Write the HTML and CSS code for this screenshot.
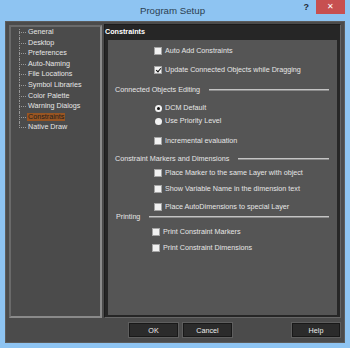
FILE: index.html
```html
<!DOCTYPE html>
<html lang="en">
<head>
    <meta charset="UTF-8" />
    <title>Program Setup</title>
    <link rel="stylesheet" href="styles.css">
</head>
<body>
    <div class="window">
        <div class="titlebar">
            <span></span>
            <span class="title">Program Setup</span>
            <div class="caption-btns">
                <span class="help">?</span>
                <span class="close">✕</span>
            </div>
        </div>
        <div class="frame">
            <div class="panes">
                <ul class="tree">
                    <li><span>General</span></li>
                    <li><span>Desktop</span></li>
                    <li><span>Preferences</span></li>
                    <li><span>Auto-Naming</span></li>
                    <li><span>File Locations</span></li>
                    <li><span>Symbol Libraries</span></li>
                    <li><span>Color Palette</span></li>
                    <li><span>Warning Dialogs</span></li>
                    <li class="selected"><span>Constraints</span></li>
                    <li><span>Native Draw</span></li>
                </ul>
                <div class="page">
                    <div class="page-head">Constraints</div>
                    <div class="page-body">
                        <label class="row ind mt6"><span class="check"></span>Auto Add Constraints</label>
                        <label class="row ind mt9"><span class="check on"></span>Update Connected Objects while Dragging</label>

                        <div class="section mt10"><span>Connected Objects Editing</span><i class="rule"></i></div>
                        <label class="row ind mt8"><span class="radio on"></span>DCM Default</label>
                        <label class="row ind mt3"><span class="radio"></span>Use Priority Level</label>
                        <label class="row ind mt10"><span class="check"></span>Incremental evaluation</label>

                        <div class="section mt8"><span>Constraint Markers and Dimensions</span><i class="rule"></i></div>
                        <label class="row ind mt4"><span class="check"></span>Place Marker to the same Layer with object</label>
                        <label class="row ind mt6"><span class="check"></span>Show Variable Name in the dimension text</label>
                        <label class="row ind mt8"><span class="check"></span>Place AutoDimensions to special Layer</label>

                        <div class="section print mt0"><span>Printing</span><i class="rule"></i></div>
                        <label class="row ind2 mt5"><span class="check"></span>Print Constraint Markers</label>
                        <label class="row ind2 mt6"><span class="check"></span>Print Constraint Dimensions</label>
                    </div>
                </div>
            </div>
            <div class="buttons">
                <button>OK</button>
                <button>Cancel</button>
                <button class="btn-help">Help</button>
            </div>
        </div>
    </div>
</body>
</html>
```

FILE: styles.css
```css
/* Dasar */
* {
    box-sizing: border-box;
}
body {
    margin: 0;
    font-family: 'Liberation Sans', Arial, sans-serif;
    font-size: 7.2px;
    color: #e6e6e6;
}
.window {
    width: 350px;
    height: 348px;
    background: #8ec4f2;
    overflow: hidden;
}

/* Title bar */
.titlebar {
    height: 21px;
    display: grid;
    grid-template-columns: 1fr auto 1fr;
    align-items: start;
    padding-right: 5px;
}
.title {
    font-size: 9.7px;
    line-height: 21px;
    color: #2c3e50;
}
.caption-btns {
    display: flex;
    justify-content: flex-end;
    align-items: center;
}
.help {
    font-size: 9px;
    font-weight: bold;
    color: #1f2a36;
    line-height: 14px;
    margin-right: 7px;
}
.close {
    width: 29px;
    height: 14px;
    background: #c75050;
    color: #fff;
    font-size: 8px;
    line-height: 14px;
    text-align: center;
}

/* Isi jendela */
.frame {
    margin: 0 5px;
    height: 322px;
    background: #4b4b4b;
    border: 1px solid #5c5c5c;
    padding: 2px 3px 0 3px;
}
.panes {
    display: flex;
    gap: 2px;
    height: 294px;
}

/* Tree */
.tree {
    list-style: none;
    margin: 1px 0 0 0;
    padding: 0 0 0 0;
    width: 93px;
    height: 293px;
    border: 2px solid;
    border-color: #6a6a6a #8a8a8a #8a8a8a #6a6a6a;
}
.tree li {
    position: relative;
    line-height: 10.6px;
    padding-left: 17px;
    white-space: nowrap;
}
.tree li::before {
    content: "";
    position: absolute;
    left: 8px;
    top: 5px;
    width: 7px;
    border-top: 1px dotted #999;
}
.tree li::after {
    content: "";
    position: absolute;
    left: 8px;
    top: 0;
    height: 100%;
    border-left: 1px dotted #999;
}
.tree li:first-child::after {
    top: 2px;
}
.tree li:last-child::after {
    height: 6px;
}
.tree .selected span {
    display: inline-block;
    line-height: 8px;
    padding: 0 1px;
    margin-left: -1px;
    background: #985522;
    color: #1e1e1e;
}

/* Halaman kanan */
.page {
    width: 237px;
    display: flex;
    flex-direction: column;
    background: #262626;
    border: 1px solid;
    border-color: #1c1c1c #666 #666 #1c1c1c;
}
.page-head {
    height: 15px;
    line-height: 13px;
    font-weight: bold;
    color: #fff;
    padding-left: 0;
}
.page-body {
    flex: 1;
    margin: 0 3px 2px 3px;
    background: #555;
    display: flex;
    flex-direction: column;
}
.row {
    height: 10px;
    line-height: 10px;
    display: flex;
    align-items: center;
    white-space: nowrap;
}
.ind {
    padding-left: 46px;
}
.ind2 {
    padding-left: 44px;
}
.check {
    width: 8px;
    height: 8px;
    background: #f2f2f2;
    border: 1px solid #a5a5a5;
    margin-right: 3px;
    flex: none;
    position: relative;
}
.check.on::after {
    content: "";
    position: absolute;
    left: 1.5px;
    top: 0;
    width: 2px;
    height: 4px;
    border: solid #111;
    border-width: 0 1.5px 1.5px 0;
    transform: rotate(40deg);
}
.radio {
    width: 7px;
    height: 7px;
    border-radius: 50%;
    background: #f2f2f2;
    margin: 0 3px 0 1px;
    flex: none;
    position: relative;
}
.radio.on::after {
    content: "";
    position: absolute;
    left: 2px;
    top: 2px;
    width: 3px;
    height: 3px;
    border-radius: 50%;
    background: #111;
}
.section {
    height: 10px;
    line-height: 10px;
    display: flex;
    align-items: center;
    padding: 0 8px 0 7px;
    white-space: nowrap;
}
.section.print {
    padding-left: 8px;
}
.rule {
    flex: 1;
    height: 2px;
    margin-left: 9px;
    border-top: 1px solid #c4c4c4;
    border-bottom: 1px solid #8a8a8a;
}
.mt0 { margin-top: 0; }
.mt3 { margin-top: 3px; }
.mt4 { margin-top: 4px; }
.mt5 { margin-top: 5px; }
.mt6 { margin-top: 6px; }
.mt8 { margin-top: 8px; }
.mt9 { margin-top: 9px; }
.mt10 { margin-top: 10px; }

/* Tombol */
.buttons {
    display: flex;
    gap: 5px;
    margin-top: 5px;
    padding-left: 120px;
    padding-right: 1px;
}
.buttons button {
    width: 49px;
    height: 14px;
    padding: 0;
    font-family: inherit;
    font-size: 7.2px;
    color: #ececec;
    background: #2b2b2b;
    border: 1px solid #181818;
    box-shadow: 0 0 0 1px #5e5e5e;
}
.buttons .btn-help {
    margin-left: auto;
    width: 48px;
}
```
